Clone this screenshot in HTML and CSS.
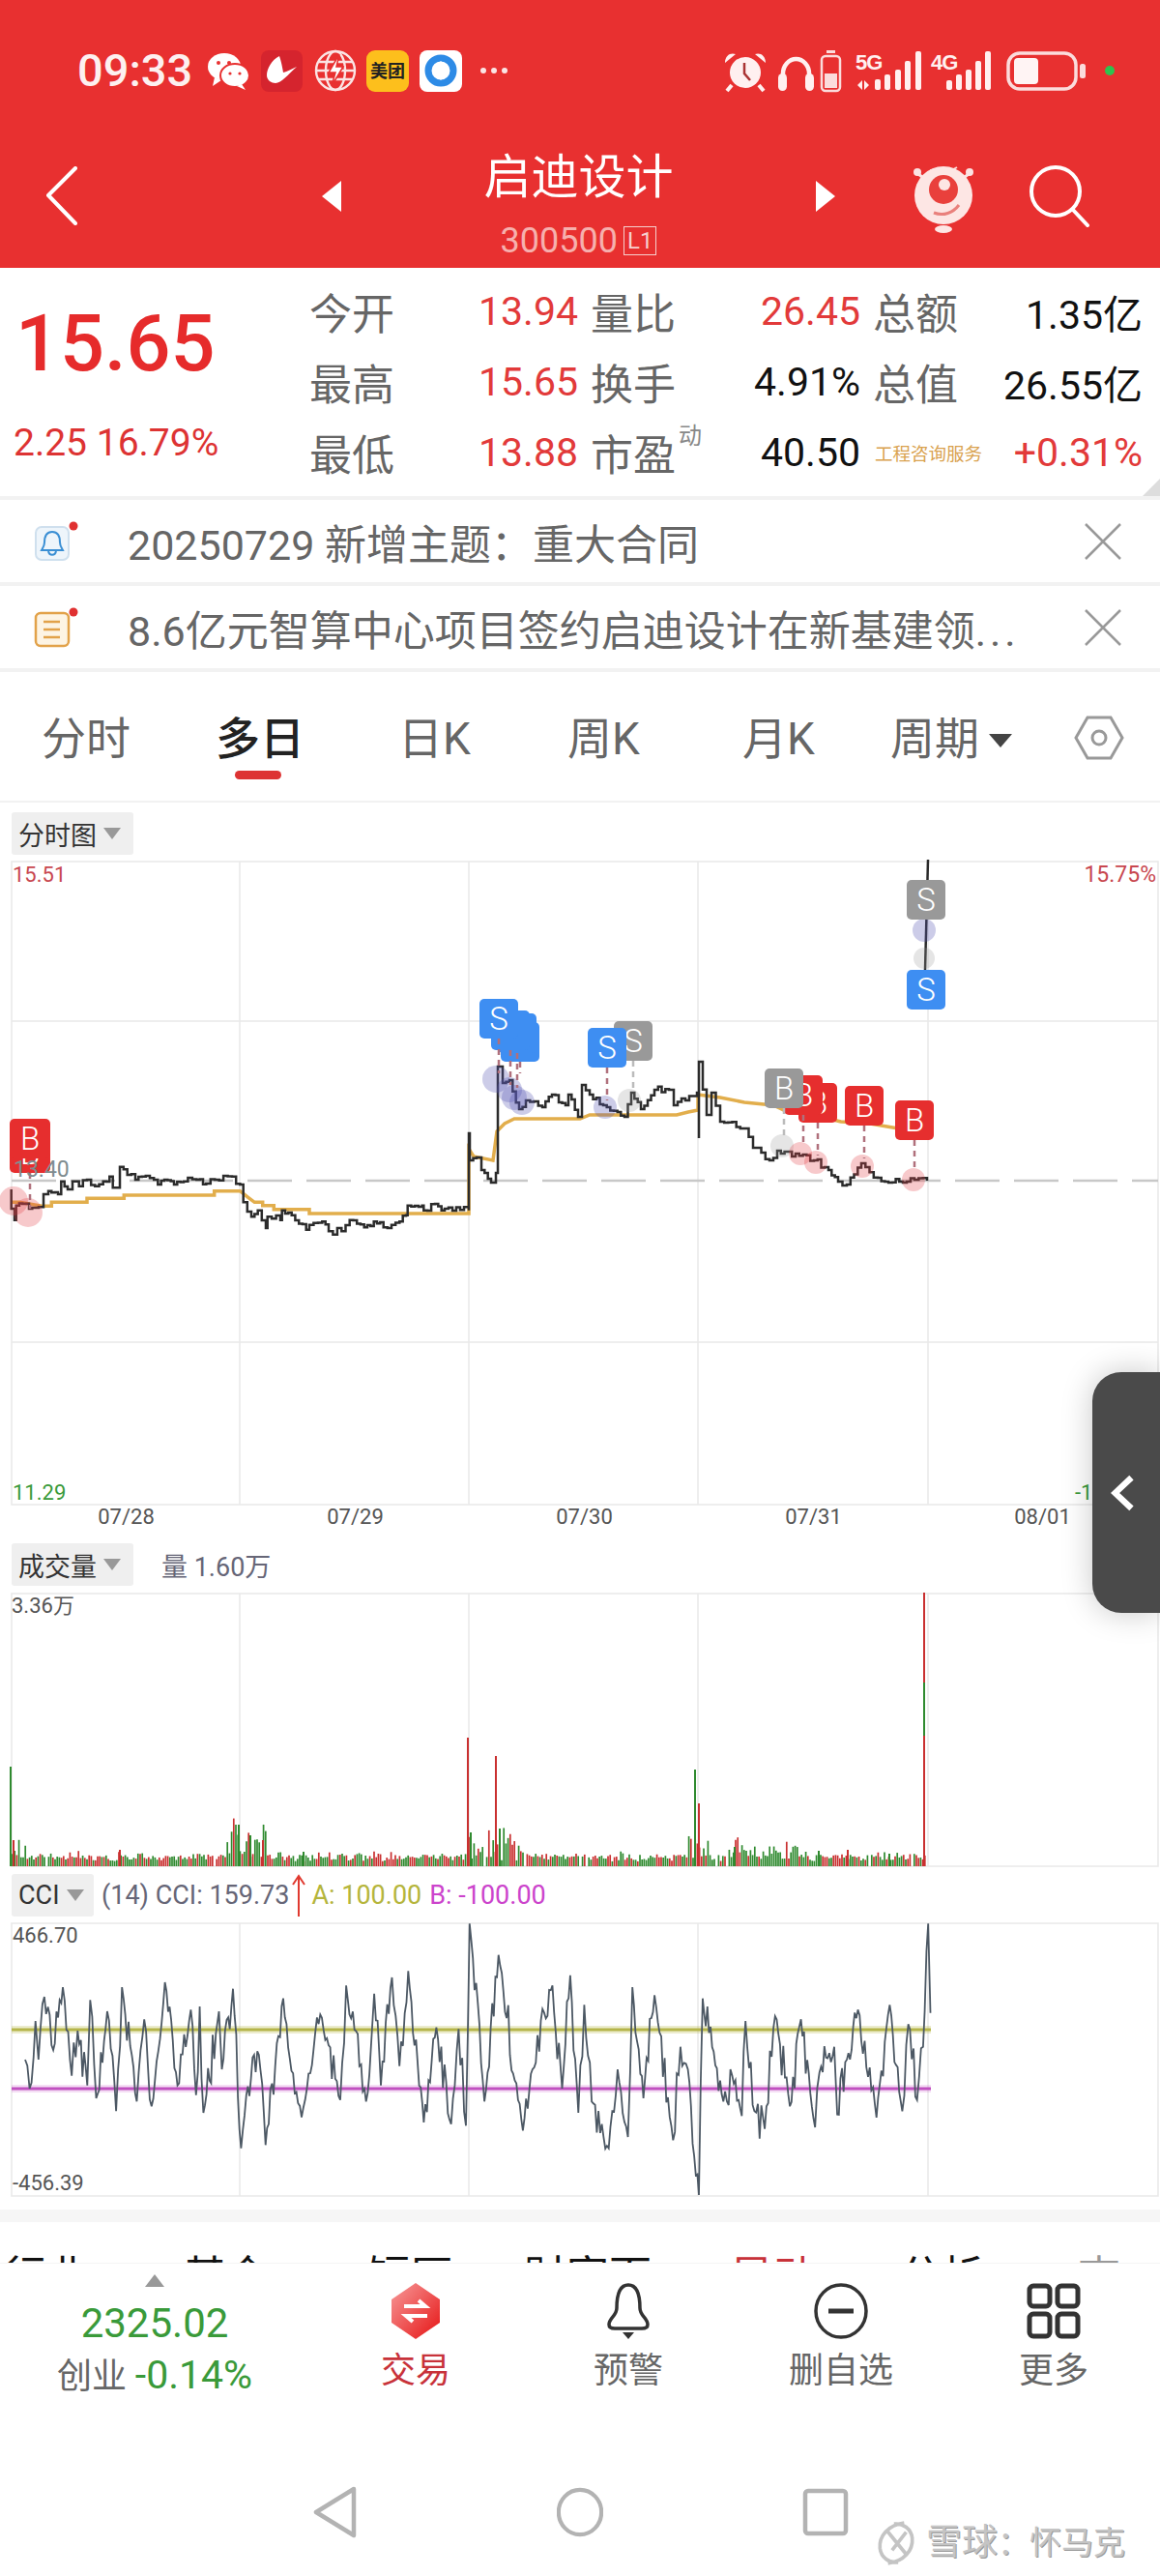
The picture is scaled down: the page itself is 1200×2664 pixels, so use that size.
FILE: index.html
```html
<!DOCTYPE html>
<html lang="zh-CN">
<head>
  <meta charset="UTF-8" />
  <meta name="viewport" content="width=device-width, initial-scale=1.0"/>
  <title>启迪设计 300500</title>
  <link rel="stylesheet" href="styles.css">
</head>
<body>
  <header class="top">
    <div class="status">
      <span class="time">09:33</span>
      <svg class="status-left" viewBox="210 45 320 56">
        <ellipse cx="232" cy="69" rx="17" ry="14" fill="#fff"/>
        <path d="M222 80l-2 9 9-6z" fill="#fff"/>
        <ellipse cx="243" cy="78" rx="15" ry="12" fill="#fff" stroke="#e83030" stroke-width="2"/>
        <path d="M250 87l4 6-9-4z" fill="#fff"/>
        <circle cx="226" cy="65" r="2" fill="#e83030"/><circle cx="237" cy="65" r="2" fill="#e83030"/>
        <circle cx="238" cy="76" r="1.6" fill="#e83030"/><circle cx="248" cy="76" r="1.6" fill="#e83030"/>
        <rect x="270" y="52" width="43" height="43" rx="8" fill="#d5242e"/>
        <path d="M289 58c-8 4-13 13-13 20 0 5 5 8 9 8 6 0 13-9 22-17-5 2-10 5-14 6-1-6-2-11-4-17z" fill="#fff"/>
        <g fill="none" stroke="#fbe4e4" stroke-width="2.4">
          <circle cx="347" cy="73" r="20"/>
          <ellipse cx="347" cy="73" rx="10" ry="20"/>
          <path d="M329 64h36M327 73h40M329 82h36"/>
        </g>
        <path d="M351 56l-11 19h7l-4 14 12-20h-7z" fill="#fff" stroke="#e83030" stroke-width="1.5"/>
        <rect x="379" y="52" width="44" height="43" rx="9" fill="#fdbf1c"/>
        <text class="mt" x="401" y="80">美团</text>
        <rect x="434" y="52" width="44" height="43" rx="8" fill="#fff"/>
        <circle cx="456" cy="73" r="13" fill="none" stroke="#2d8be6" stroke-width="7"/>
        <path d="M456 63c4 4 4 16 0 20-4-4-4-16 0-20z" fill="#fff"/>
        <circle cx="500" cy="73" r="3" fill="#fbe4e4"/><circle cx="511" cy="73" r="3" fill="#fbe4e4"/><circle cx="522" cy="73" r="3" fill="#fbe4e4"/>
      </svg>
      <svg class="status-right" viewBox="745 45 415 56">
        <circle cx="771" cy="75" r="16" fill="#fff0f0"/>
        <path d="M750 65c0-8 6-11 11-9zM792 65c0-8-6-11-11-9z" fill="#fff0f0"/>
        <path d="M757 88l-5 6M785 88l5 6" stroke="#fff0f0" stroke-width="4"/>
        <path d="M770 65v11l6 7" fill="none" stroke="#a33" stroke-width="2.5"/>
        <path d="M810 86v-10a13.500 15 0 0 1 27 0v10" fill="none" stroke="#fff0f0" stroke-width="4.500"/>
        <rect x="805" y="76" width="9" height="18" rx="4.500" fill="#fff0f0"/>
        <rect x="833" y="76" width="9" height="18" rx="4.500" fill="#fff0f0"/>
        <rect x="850" y="58" width="19" height="36" rx="4" fill="none" stroke="#fbdcdc" stroke-width="2.500"/>
        <rect x="855" y="52" width="9" height="3" fill="#fbdcdc"/>
        <rect x="853" y="76" width="13" height="15" fill="#fbdcdc"/>
        <text class="net" x="885" y="72">5G</text>
        <path d="M887 88l5-5v10zM899 88l-5-5v10z" fill="#fff0f0"/>
        <g fill="#fff0f0">
          <rect x="905" y="82" width="6" height="11" rx="2"/><rect x="915" y="77" width="6" height="16" rx="2"/>
          <rect x="926" y="72" width="6" height="21" rx="2"/><rect x="936" y="63" width="6" height="30" rx="2"/>
          <rect x="947" y="53" width="6" height="40" rx="2"/>
          <rect x="979" y="83" width="6" height="10" rx="2"/><rect x="989" y="77" width="6" height="16" rx="2"/>
          <rect x="999" y="72" width="6" height="21" rx="2"/><rect x="1009" y="63" width="6" height="30" rx="2"/>
          <rect x="1019" y="53" width="6" height="40" rx="2"/>
        </g>
        <text class="net" x="963" y="72">4G</text>
        <rect x="1043" y="55" width="70" height="37" rx="12" fill="none" stroke="#fbdcdc" stroke-width="3.500"/>
        <rect x="1049" y="60" width="25" height="27" rx="4" fill="#fff4f4"/>
        <rect x="1117" y="66" width="6" height="15" rx="2.500" fill="#fbdcdc"/>
        <circle cx="1148" cy="73" r="5" fill="#2fc24f"/>
      </svg>
    </div>
    <nav class="nav">
      <svg class="back" viewBox="0 0 33 61"><path d="M31 2L3 30l28 29" fill="none" stroke="#fff" stroke-width="4" stroke-linecap="round" stroke-linejoin="round"/></svg>
      <span class="arrow arrow-left"></span>
      <div class="stock">
        <div class="stock-name">启迪设计</div>
        <div class="stock-code">300500<span class="level">L1</span></div>
      </div>
      <span class="arrow arrow-right"></span>
      <svg class="robot" viewBox="0 0 64 78">
        <path d="M18 12l8 3 6-5 5 4 9-5" fill="none" stroke="#fbdcdc" stroke-width="2"/>
        <circle cx="5" cy="14" r="4" fill="#fbe3e3"/><circle cx="59" cy="14" r="4" fill="#fbe3e3"/>
        <path d="M6 16l8 6M58 16l-8 6" stroke="#fbe3e3" stroke-width="3"/>
        <ellipse cx="32" cy="38" rx="30" ry="30" fill="#fde6e4"/>
        <circle cx="32" cy="32" r="15" fill="#e9403c"/>
        <circle cx="33" cy="27" r="6" fill="#fde6e4"/>
        <path d="M22 56c10 4 20 0 26-8" fill="none" stroke="#e9807c" stroke-width="3"/>
        <ellipse cx="32" cy="73" rx="9" ry="4" fill="#fde6e4"/>
      </svg>
      <svg class="search" viewBox="0 0 63 64"><circle cx="28" cy="27" r="25" fill="none" stroke="#fff" stroke-width="4"/><path d="M46 46l15 16" stroke="#fff" stroke-width="4" stroke-linecap="round"/></svg>
    </nav>
  </header>

  <section class="quote">
    <div class="price-box">
      <div class="price">15.65</div>
      <div class="change">2.25 16.79%</div>
    </div>
    <div class="fields">
      <span class="lab">今开</span><span class="val up">13.94</span>
      <span class="lab">量比</span><span class="val up">26.45</span>
      <span class="lab">总额</span><span class="val">1.35亿</span>
      <span class="lab">最高</span><span class="val up">15.65</span>
      <span class="lab">换手</span><span class="val">4.91%</span>
      <span class="lab">总值</span><span class="val">26.55亿</span>
      <span class="lab">最低</span><span class="val up">13.88</span>
      <span class="lab pe">市盈<sup class="dyn">动</sup></span><span class="val">40.50</span>
      <span class="lab sector">工程咨询服务</span><span class="val up">+0.31%</span>
    </div>
    <span class="corner"></span>
  </section>

  <div class="notice">
    <svg class="notice-icon" viewBox="0 0 46 42">
      <rect x="2" y="6" width="34" height="34" rx="6" fill="#eef5fb" stroke="#cfe0ee" stroke-width="2"/>
      <path d="M19 11c-6 0-8 5-8 11 0 4-2 6-3 8h22c-1-2-3-4-3-8 0-6-2-11-8-11z" fill="none" stroke="#3b8fd4" stroke-width="2"/>
      <path d="M15 31c1 5 7 5 8 0" fill="none" stroke="#3b8fd4" stroke-width="2"/>
      <circle cx="41" cy="5" r="4.500" fill="#e03030"/>
    </svg>
    <span class="notice-text">20250729 新增主题：重大合同</span>
    <svg class="notice-close" viewBox="0 0 38 38"><path d="M1 1l36 36M37 1L1 37" stroke="#999" stroke-width="2.500"/></svg>
  </div>
  <div class="notice">
    <svg class="notice-icon" viewBox="0 0 46 42">
      <rect x="2" y="6" width="34" height="34" rx="5" fill="#fdf4e4" stroke="#e2a24a" stroke-width="2.500"/>
      <path d="M10 15h17M10 23h17M10 31h17" stroke="#e2a24a" stroke-width="2.500"/>
      <circle cx="41" cy="5" r="4.500" fill="#e03030"/>
    </svg>
    <span class="notice-text">8.6亿元智算中心项目签约启迪设计在新基建领<span class="dots">...</span></span>
    <svg class="notice-close" viewBox="0 0 38 38"><path d="M1 1l36 36M37 1L1 37" stroke="#999" stroke-width="2.500"/></svg>
  </div>

  <div class="tabs">
    <span class="tab">分时</span>
    <span class="tab tab-on">多日</span>
    <span class="tab">日K</span>
    <span class="tab">周K</span>
    <span class="tab">月K</span>
    <span class="tab">周期<i class="tab-caret"></i></span>
    <svg class="hex" viewBox="0 0 52 46"><path d="M14 2h24l12 21-12 21H14L2 23z" fill="none" stroke="#999" stroke-width="3"/><circle cx="26" cy="23" r="7" fill="none" stroke="#999" stroke-width="3"/></svg>
  </div>

  <div class="panel-head head-price"><span class="picker">分时图<i class="caret"></i></span></div>
  <div class="chart chart-price">
    <svg id="priceChart" class="plot" viewBox="0 891 1200 665"></svg>
    <span class="tick tick-up t-tl">15.51</span>
    <span class="tick tick-up t-tr">15.75%</span>
    <span class="tick tick-mid">13.40</span>
    <span class="tick tick-down t-bl">11.29</span>
    <span class="tick tick-down t-br">-15.75%</span>
  </div>
  <div class="dates">
    <span>07/28</span><span>07/29</span><span>07/30</span><span>07/31</span><span>08/01</span>
  </div>

  <div class="panel-head head-vol">
    <span class="picker">成交量<i class="caret"></i></span>
    <span class="legend legend-vol">量 1.60万</span>
  </div>
  <div class="chart chart-small">
    <svg id="volChart" class="plot" viewBox="0 1648 1200 282"></svg>
    <span class="tick tick-grey t-vol">3.36万</span>
  </div>

  <div class="panel-head head-cci">
    <span class="picker picker-cci">CCI<i class="caret"></i></span>
    <span class="legend">(14) CCI: 159.73</span>
    <svg class="up-arrow" viewBox="0 0 14 44"><path d="M7 44V3M1 11l6-9 6 9" fill="none" stroke="#e0392f" stroke-width="2"/></svg>
    <span class="legend legend-a">A: 100.00</span>
    <span class="legend legend-b">B: -100.00</span>
  </div>
  <div class="chart chart-small">
    <svg id="cciChart" class="plot" viewBox="0 1989 1200 282"></svg>
    <span class="tick tick-grey t-cci-top">466.70</span>
    <span class="tick tick-grey t-cci-low">-456.39</span>
  </div>

  <div class="band"></div>
  <div class="subtabs">
    <span>行业</span><span>基金</span><span>短历</span><span>财富面</span><span class="subtab-on">异动</span><span>分析</span><span class="subtab-dim">查</span>
  </div>

  <footer class="bottom">
    <div class="index">
      <span class="index-caret"></span>
      <div class="index-val">2325.02</div>
      <div class="index-name">创业 <b>-0.14%</b></div>
    </div>
    <div class="action action-on">
      <svg viewBox="0 0 56 60">
        <defs><linearGradient id="tradeFill" x1="0" y1="0" x2="1" y2="1"><stop offset="0" stop-color="#f79a9a"/><stop offset="1" stop-color="#e61414"/></linearGradient></defs>
        <path d="M28 1l25 17v24L28 59 3 42V18z" fill="url(#tradeFill)"/>
        <path d="M16 25h22l-7-6M40 35H18l7 6" fill="none" stroke="#fff" stroke-width="4"/>
      </svg>
      <span>交易</span>
    </div>
    <div class="action">
      <svg viewBox="0 0 56 60">
        <path d="M28 3c-10 0-12 12-12 24 0 8-8 10-8 17 0 3 3 4 6 4h28c3 0 6-1 6-4 0-7-8-9-8-17 0-12-2-24-12-24z" fill="none" stroke="#333" stroke-width="3.500"/>
        <path d="M22 52h12l-6 7z" fill="#333"/>
      </svg>
      <span>预警</span>
    </div>
    <div class="action">
      <svg viewBox="0 0 56 60">
        <ellipse cx="28" cy="30" rx="26" ry="27" fill="none" stroke="#333" stroke-width="3.500"/>
        <path d="M15 30h26" stroke="#333" stroke-width="5"/>
      </svg>
      <span>删自选</span>
    </div>
    <div class="action">
      <svg viewBox="0 0 56 60">
        <g fill="none" stroke="#333" stroke-width="5">
          <rect x="3" y="4" width="21" height="21" rx="4"/><rect x="32" y="4" width="21" height="21" rx="4"/>
          <rect x="3" y="33" width="21" height="23" rx="4"/><rect x="32" y="33" width="21" height="23" rx="4"/>
        </g>
      </svg>
      <span>更多</span>
    </div>
  </footer>

  <div class="sysbar">
    <svg viewBox="0 0 46 54" class="sys-btn"><path d="M43 3L4 27l39 24z" fill="none" stroke="#b3b3b3" stroke-width="4.500" stroke-linejoin="round"/></svg>
    <svg viewBox="0 0 52 54" class="sys-btn sys-mid"><ellipse cx="26" cy="27" rx="24" ry="25" fill="none" stroke="#b3b3b3" stroke-width="4.500"/></svg>
    <svg viewBox="0 0 48 54" class="sys-btn"><rect x="3" y="5" width="42" height="44" rx="3" fill="none" stroke="#b3b3b3" stroke-width="4.500"/></svg>
  </div>

  <div class="handle">
    <svg viewBox="0 0 24 36"><path d="M20 3L4 18l16 15" fill="none" stroke="#fff" stroke-width="6"/></svg>
  </div>

  <div class="watermark">
    <svg viewBox="0 0 40 46"><path d="M28 3C12 5 3 16 4 28c1 9 9 15 18 14M12 43c16-2 25-13 24-25C35 9 27 3 18 4M12 12l18 22M30 12L16 30" fill="none" stroke="#c4c4c4" stroke-width="3.500"/></svg>
    <span class="wm-site">雪球</span><span class="wm-user">：怀马克</span>
  </div>

  <script src="chart.js"></script>
</body>
</html>
```

FILE: styles.css
```css
* {
  box-sizing: border-box;
}
body {
  margin: 0;
  width: 1200px;
  height: 2664px;
  position: relative;
  overflow: hidden;
  background: #fff;
  font-family: Roboto, "Noto Sans CJK SC", sans-serif;
  color: #333;
}
svg {
  display: block;
}

/* red header */
.top {
  height: 277px;
  background: #e83030;
  color: #fff;
}
.status {
  height: 118px;
  padding: 45px 40px 0 80px;
  display: flex;
  align-items: flex-start;
}
.time {
  font-size: 47px;
  font-weight: 500;
  line-height: 56px;
  color: #fdf0f0;
  width: 130px;
}
.status-left {
  width: 320px;
  height: 56px;
}
.status-right {
  width: 415px;
  height: 56px;
  margin-left: 215px;
}
.mt {
  font-size: 18px;
  font-weight: 700;
  fill: #222;
  text-anchor: middle;
  font-family: "Noto Sans CJK SC", sans-serif;
}
.net {
  font-size: 22px;
  font-weight: 700;
  fill: #fff0f0;
  font-family: "Liberation Sans", sans-serif;
  letter-spacing: -1px;
}
.nav {
  height: 159px;
  padding: 10px 72px 0 47px;
  display: flex;
  align-items: center;
}
.back {
  width: 33px;
  height: 61px;
}
.arrow {
  width: 0;
  height: 0;
  border-top: 16px solid transparent;
  border-bottom: 16px solid transparent;
}
.arrow-left {
  margin-left: 253px;
  border-right: 20px solid #fff;
}
.arrow-right {
  border-left: 20px solid #fff;
}
.stock {
  width: 491px;
  align-self: flex-start;
  margin-top: 29px;
  text-align: center;
}
.stock-name {
  font-size: 49px;
  line-height: 54px;
}
.stock-code {
  margin-top: 20px;
  font-size: 36px;
  line-height: 36px;
  color: #f6b0ae;
  display: flex;
  justify-content: center;
  align-items: center;
  gap: 6px;
}
.level {
  font-size: 24px;
  line-height: 28px;
  border: 1px solid #f6d0ce;
  padding: 0 3px;
  color: #f6d0ce;
}
.robot {
  width: 64px;
  height: 78px;
  margin-left: 80px;
}
.search {
  width: 63px;
  height: 64px;
  margin-left: 56px;
}

/* quote block */
.quote {
  height: 240px;
  position: relative;
  display: flex;
  padding-top: 8px;
  border-bottom: 4px solid #f2f2f2;
}
.price-box {
  width: 320px;
  padding-left: 14px;
}
.price {
  font-size: 81px;
  font-weight: 500;
  line-height: 100px;
  margin-top: 21px;
  padding-left: 2px;
  color: #e62b2b;
}
.change {
  font-size: 39px;
  line-height: 44px;
  margin-top: 30px;
  color: #dd3333;
  white-space: nowrap;
}
.fields {
  display: grid;
  grid-template-columns: 85px 193px 100px 192px 100px 192px;
  grid-auto-rows: 73px;
  align-items: center;
}
.lab {
  font-size: 44px;
  color: #666;
  white-space: nowrap;
}
.lab:nth-child(6n+3),
.lab:nth-child(6n+5) {
  margin-left: 13px;
}
.val {
  font-size: 41px;
  text-align: right;
  color: #111;
  white-space: nowrap;
}
.val.up {
  color: #e23a3a;
}
.pe {
  position: relative;
}
.dyn {
  position: absolute;
  left: 91px;
  top: 0;
  font-size: 24px;
  line-height: 30px;
  color: #888;
}
.lab.sector {
  font-size: 18.500px;
  color: #d9a24f;
  padding-left: 2px;
}
.corner {
  position: absolute;
  right: 0;
  bottom: 0;
  width: 0;
  height: 0;
  border-bottom: 18px solid #ddd;
  border-left: 18px solid transparent;
}

/* notices */
.notice {
  height: 89px;
  display: flex;
  align-items: center;
  padding: 0 40px 0 35px;
  border-bottom: 4px solid #f2f2f2;
}
.notice-icon {
  width: 46px;
  height: 42px;
}
.notice-text {
  margin-left: 51px;
  font-size: 43px;
  color: #666;
  white-space: nowrap;
  flex: 1;
}
.dots {
  letter-spacing: 4px;
}
.notice-close {
  width: 38px;
  height: 38px;
}

/* period tabs */
.tabs {
  height: 135px;
  padding: 45px 0 0 43px;
  display: grid;
  grid-template-columns: 180px 189px 175px 181px 153px 190px 52px;
  align-items: start;
  border-bottom: 2px solid #f2f2f2;
}
.tab {
  font-size: 46px;
  line-height: 48px;
  color: #666;
  position: relative;
  white-space: nowrap;
}
.tab-on {
  color: #222;
  font-weight: 500;
}
.tab-on::after {
  content: "";
  position: absolute;
  left: 20px;
  top: 57px;
  width: 48px;
  height: 9px;
  border-radius: 5px;
  background: #dd3333;
}
.tab-caret {
  display: inline-block;
  margin-left: 10px;
  vertical-align: 7px;
  border-top: 14px solid #444;
  border-left: 12px solid transparent;
  border-right: 12px solid transparent;
}
.hex {
  width: 52px;
  height: 46px;
}

/* charts */
.panel-head {
  display: flex;
  align-items: center;
  padding-left: 12px;
}
.head-price {
  height: 61px;
  padding-top: 10px;
  padding-bottom: 7px;
}
.head-vol {
  height: 52px;
  padding-bottom: 8px;
}
.head-cci {
  height: 59px;
  padding-top: 8px;
  padding-bottom: 7px;
}
.picker {
  height: 44px;
  background: #efefef;
  border-radius: 3px;
  padding-left: 7px;
  width: 126px;
  font-size: 27px;
  color: #333;
  display: flex;
  align-items: center;
}
.picker-cci {
  width: 85px;
}
.caret {
  margin-left: 7px;
  border-top: 12px solid #999;
  border-left: 9px solid transparent;
  border-right: 9px solid transparent;
}
.legend {
  font-size: 27px;
  color: #667;
  margin-left: 8px;
  white-space: nowrap;
}
.legend-vol {
  margin-left: 29px;
}
.legend-a {
  color: #b5b53c;
  margin-left: 6px;
}
.legend-b {
  color: #cc44cc;
}
.up-arrow {
  width: 14px;
  height: 44px;
  margin-left: 3px;
}
.chart {
  position: relative;
  width: 1200px;
}
.chart-price {
  height: 665px;
}
.chart-small {
  height: 282px;
}
.plot {
  width: 1200px;
  height: 100%;
  overflow: visible;
}
.mark-text {
  font-family: Roboto, sans-serif;
  font-size: 33px;
  font-weight: 300;
  fill: #fff;
  text-anchor: middle;
}
.tick {
  position: absolute;
  font-size: 22px;
  line-height: 26px;
}
.tick-up {
  color: #c8474f;
}
.tick-down {
  color: #3a9a3a;
}
.tick-grey {
  color: #555;
}
.tick-mid {
  left: 14px;
  top: 306px;
  color: #7f8c8f;
  font-size: 23px;
}
.t-tl {
  left: 13px;
  top: 1px;
}
.t-tr {
  right: 4px;
  top: 1px;
  font-size: 23px;
}
.t-bl {
  left: 13px;
  top: 640px;
}
.t-br {
  left: 1112px;
  top: 640px;
}
.t-vol {
  left: 12px;
  top: 0;
}
.t-cci-top {
  left: 13px;
  top: 0;
}
.t-cci-low {
  left: 13px;
  bottom: 0;
}
.dates {
  height: 40px;
  padding: 0 0 0 12px;
  display: grid;
  grid-template-columns: repeat(5, 237px);
  font-size: 22px;
  line-height: 26px;
  color: #555;
  text-align: center;
}

/* bottom */
.band {
  margin-top: 14px;
  height: 13px;
  background: #f6f6f6;
}
.subtabs {
  height: 42px;
  overflow: hidden;
  padding: 33px 0 0 4px;
  display: grid;
  grid-template-columns: 186px 190px 162px 214px 174px 185px 80px;
  font-size: 44px;
  line-height: 48px;
  color: #111;
}
.subtabs .subtab-on {
  color: #c8323a;
}
.subtabs .subtab-dim {
  color: #999;
}
.bottom {
  height: 160px;
  display: grid;
  grid-template-columns: 320px repeat(4, 220px);
  text-align: center;
  border-top: 1px solid #f4f4f4;
}
.index {
  padding-top: 11px;
  display: flex;
  flex-direction: column;
  align-items: center;
}
.index-caret {
  border-bottom: 13px solid #999;
  border-left: 10px solid transparent;
  border-right: 10px solid transparent;
  margin-bottom: 13px;
}
.index-val {
  font-size: 42px;
  line-height: 50px;
  color: #3a9a3a;
}
.index-name {
  font-size: 36px;
  line-height: 52px;
  margin-top: 2px;
  color: #666;
  white-space: nowrap;
}
.index-name b {
  font-size: 41px;
  font-weight: 400;
  color: #3a9a3a;
}
.action {
  padding-top: 19px;
  display: flex;
  flex-direction: column;
  align-items: center;
  font-size: 36px;
  line-height: 44px;
  color: #666;
}
.action svg {
  width: 56px;
  height: 60px;
  margin-bottom: 10px;
}
.action-on {
  color: #c8323a;
}
.sysbar {
  padding-top: 71px;
  display: flex;
  justify-content: center;
  align-items: center;
}
.sys-btn {
  width: 48px;
  height: 54px;
}
.sys-mid {
  margin: 0 206px;
}
.handle {
  position: absolute;
  right: 0;
  top: 1419px;
  width: 70px;
  height: 249px;
  background: #4a4a4a;
  border-radius: 30px 0 0 30px;
  box-shadow: 0 0 32px rgba(0, 0, 0, 0.22);
  display: flex;
  align-items: center;
  padding-left: 19px;
}
.handle svg {
  width: 26px;
  height: 38px;
}
.watermark {
  position: absolute;
  left: 906px;
  top: 2606px;
  display: flex;
  align-items: center;
  color: #c4c4c4;
  white-space: nowrap;
  text-shadow: 1px 1px 0 #999;
}
.watermark svg {
  width: 42px;
  height: 48px;
  margin-right: 10px;
}
.wm-site {
  font-size: 37px;
  line-height: 44px;
}
.wm-user {
  font-size: 33px;
  line-height: 44px;
}
```

FILE: chart.js
```js
// draws the three charts in page coordinates (see each svg's viewBox)
const NS = 'http://www.w3.org/2000/svg';
const COLS = [248, 485, 722, 960];

let seed = 20250731;
function rnd() {
  seed = (seed * 1103515245 + 12345) % 2147483648;
  return seed / 2147483648;
}

function add(parent, name, attrs) {
  const node = document.createElementNS(NS, name);
  for (const key in attrs) node.setAttribute(key, attrs[key]);
  parent.appendChild(node);
  return node;
}

function line(parent, x1, y1, x2, y2, color, width, dash) {
  const attrs = { x1, y1, x2, y2, stroke: color, 'stroke-width': width };
  if (dash) attrs['stroke-dasharray'] = dash;
  return add(parent, 'line', attrs);
}

function grid(svg, top, bottom, rows) {
  const color = '#e9e9e9';
  add(svg, 'rect', { x: 12, y: top, width: 1186, height: bottom - top, fill: 'none', stroke: color, 'stroke-width': 1.5 });
  COLS.forEach(x => line(svg, x, top, x, bottom, color, 1.5));
  rows.forEach(y => line(svg, 12, y, 1198, y, color, 1.5));
}

function polyline(svg, pts, color, width) {
  add(svg, 'polyline', {
    points: pts.map(p => p[0].toFixed(1) + ',' + p[1].toFixed(1)).join(' '),
    fill: 'none', stroke: color, 'stroke-width': width, 'stroke-linejoin': 'miter'
  });
}

// stair-step a list of anchor points, adding a little noise between them
function jag(anchors, amp) {
  const out = [anchors[0]];
  let lastY = anchors[0][1];
  for (let i = 1; i < anchors.length; i++) {
    const a = anchors[i - 1], b = anchors[i];
    const steps = Math.max(1, Math.round((b[0] - a[0]) / 4));
    for (let s = 1; s <= steps; s++) {
      const x = a[0] + (b[0] - a[0]) * s / steps;
      let y = a[1] + (b[1] - a[1]) * s / steps;
      if (s < steps) y += (rnd() - 0.5) * amp;
      out.push([x, lastY], [x, y]);
      lastY = y;
    }
  }
  return out;
}

// anchors for 07/28 and 07/29 read at 3x, the rest in page px
const z = (zx, zy) => [zx / 3, 1150 + zy / 3];
const priceAnchors = [
  z(35, 240), z(35, 300), z(45, 300), z(45, 335), z(50, 290), z(70, 285), z(90, 300), z(120, 295),
  z(135, 255), z(150, 245), z(180, 255), z(190, 215), z(210, 240), z(225, 215), z(245, 230), z(270, 210),
  z(295, 230), z(320, 215), z(340, 200), z(350, 235), z(365, 235), z(372, 170), z(395, 195), z(420, 210),
  z(440, 200), z(465, 205), z(490, 225), z(510, 210), z(540, 225), z(570, 215), z(610, 210), z(640, 222),
  z(680, 212), z(720, 200), z(745, 225), z(755, 280), z(780, 325), z(800, 305), z(825, 360), z(830, 325),
  z(870, 335), z(875, 305), z(905, 320), z(950, 365), z(960, 350), z(1000, 340), z(1020, 370), z(1060, 370),
  z(1085, 335), z(1130, 358), z(1160, 340), z(1190, 358), z(1240, 340), z(1260, 320), z(1265, 290),
  z(1310, 290), z(1315, 305), z(1350, 285), z(1380, 300), z(1440, 295), z(1455, 305),
  [485, 1172], [486, 1200], [493, 1197], [498, 1210], [508, 1223], [513, 1213], [515, 1103], [520, 1120],
  [527, 1117], [537, 1147], [544, 1138], [561, 1145], [571, 1132], [585, 1143], [588, 1132], [598, 1155],
  [602, 1122], [610, 1132], [624, 1143], [646, 1155], [653, 1130], [663, 1147], [677, 1127], [692, 1127],
  [697, 1143], [721, 1130], [723, 1177], [723, 1098], [731, 1153], [736, 1130], [745, 1160], [770, 1167],
  [779, 1187], [796, 1200], [804, 1190], [823, 1193], [842, 1200], [857, 1210], [867, 1222], [876, 1225],
  [891, 1203], [908, 1218], [934, 1223], [946, 1220], [959, 1221]
];

const avgPoints = [
  z(35, 280), z(60, 280), z(130, 292), z(160, 292), z(160, 280), z(270, 280), z(270, 268), z(385, 268),
  z(385, 258), z(665, 258), z(665, 245), z(745, 245), z(770, 265), z(790, 280), z(815, 280), z(815, 290),
  z(850, 290), z(850, 302), z(960, 302), z(960, 315), z(1260, 315), z(1455, 315),
  [485, 1188], [490, 1196], [510, 1200], [514, 1170], [522, 1162], [532, 1157], [600, 1157], [610, 1153],
  [700, 1153], [712, 1150], [722, 1148], [722, 1132], [745, 1135], [770, 1140], [800, 1143], [815, 1150],
  [840, 1153], [870, 1160], [900, 1162], [935, 1168], [960, 1168]
];

// translucent trade dots: x, y, radius, kind
const dots = [
  [14, 1242, 15, 'r'], [29, 1254, 15, 'r'],
  [513, 1116, 14, 'b'], [527, 1127, 13, 'b'], [532, 1135, 13, 'b'], [540, 1140, 13, 'b'],
  [626, 1145, 12, 'b'], [651, 1138, 12, 'g'],
  [809, 1185, 12, 'g'], [828, 1193, 12, 'r'], [844, 1202, 12, 'r'], [892, 1206, 12, 'r'], [945, 1220, 12, 'r'],
  [956, 962, 12, 'b'], [956, 991, 11, 'g']
];

// flags in paint order: left, top, label, kind, dashed stem down to y
const flags = [
  [518, 1057, '', 'b', 1110], [515, 1048, '', 'b', 1125], [508, 1045, '', 'b', 1122], [496, 1033, 'S', 'b', 1110],
  [635, 1056, 'S', 'g', 1130], [608, 1063, 'S', 'b', 1138],
  [938, 910, 'S', 'g', 0], [938, 1003, 'S', 'b', 0],
  [826, 1120, 'B', 'r', 1195], [811, 1112, 'B', 'r', 1186], [791, 1105, 'B', 'g', 1178],
  [874, 1123, 'B', 'r', 1198], [926, 1138, 'B', 'r', 1212],
  [10, 1172, 'B', 'r', 1250], [10, 1157, 'B', 'r', 0]
];
const FLAG = { b: '#3e8ef2', g: '#999999', r: '#e62e2e' };
const DOT = { b: 'rgba(86,86,178,0.30)', g: 'rgba(150,150,150,0.25)', r: 'rgba(226,60,70,0.28)' };

function drawPrice() {
  const svg = document.getElementById('priceChart');
  grid(svg, 891, 1556, [1056, 1388]);
  line(svg, 12, 1221, 1198, 1221, '#c8c8c8', 2.5, '46 15');
  polyline(svg, avgPoints, '#e2ae4c', 3.5);
  polyline(svg, jag(priceAnchors, 7), '#2b2b2b', 2.5);
  line(svg, 960, 889, 957, 1003, '#2b2b2b', 2.5);
  dots.forEach(d => add(svg, 'circle', { cx: d[0], cy: d[1], r: d[2], fill: DOT[d[3]] }));
  flags.forEach(f => {
    const w = f[0] === 10 ? 42 : 40;
    if (f[4]) line(svg, f[0] + w / 2, f[1] + 41, f[0] + w / 2, f[4], f[3] === 'g' ? '#bbb' : '#b0707c', 2.5, '6 5');
    add(svg, 'rect', { x: f[0], y: f[1], width: w, height: 41, rx: 5, fill: FLAG[f[3]] });
    if (f[2]) add(svg, 'text', { x: f[0] + w / 2, y: f[1] + 32, class: 'mark-text' }).textContent = f[2];
  });
}

function drawVolume() {
  const svg = document.getElementById('volChart');
  const bottom = 1930;
  const GREEN = '#2f8a2f', RED = '#c93030';
  grid(svg, 1648, bottom, []);
  const busy = x => {
    if (x < 30) return 14;
    if (x > 235 && x < 280) return 28;
    if (x > 484 && x < 545) return 26;
    if (x > 712 && x < 770) return 22;
    if (x > 770 && x < 835) return 12;
    return 4;
  };
  for (let x = 13; x < 958; x += 2.2) {
    const h = 5 + rnd() * 6 + rnd() * rnd() * busy(x) * 1.6;
    if (rnd() < 0.04) continue;
    line(svg, x, bottom, x, bottom - h, rnd() < 0.55 ? GREEN : RED, 1.7);
  }
  // the tall bars, x / top / colour
  const spikes = [
    [11, 1827, GREEN], [14, 1903, RED], [124, 1913, RED], [247, 1887, GREEN], [259, 1898, GREEN],
    [272, 1903, RED], [314, 1915, GREEN], [484, 1797, RED], [487, 1895, GREEN], [513, 1816, RED],
    [517, 1891, GREEN], [719, 1830, GREEN], [723, 1865, RED], [760, 1910, GREEN], [847, 1914, GREEN],
    [877, 1913, RED], [920, 1917, GREEN]
  ];
  spikes.forEach(s => line(svg, s[0], bottom, s[0], s[1], s[2], 2));
  line(svg, 956, bottom, 956, 1647, RED, 2);
  line(svg, 956, 1795, 956, 1740, GREEN, 2);
}

function drawCci() {
  const svg = document.getElementById('cciChart');
  grid(svg, 1989, 2271, []);
  line(svg, 12, 2099, 963, 2099, 'rgba(181,181,60,0.25)', 8);
  line(svg, 12, 2160, 963, 2160, 'rgba(200,80,200,0.18)', 8);
  line(svg, 12, 2099, 963, 2099, '#b5b54a', 3);
  line(svg, 12, 2160, 963, 2160, '#c050c0', 3);
  // swing highs and lows read off the 1.307x by 3x crop
  const swings = [34,570,40,660,48,450,52,570,60,375,72,540,85,345,97,620,105,480,118,650,122,385,130,690,145,420,157,730,165,345,185,700,195,445,205,715,223,330,240,650,258,415,265,680,270,405,275,735,296,420,300,600,315,350,326,845,333,680,350,555,359,835,383,380,403,705,415,660,433,430,460,695,468,340,495,700,506,365,515,650,530,315,540,590,552,295,573,765,590,470,610,770,620,475,630,775,635,148,655,700,674,245,707,790,720,600,747,340,760,660,771,308,782,735,790,400,800,700,823,845,835,600,849,810,855,345,870,690,885,370,910,820,920,530,930,600,945,990,950,380,965,545,978,700,990,620,1003,745,1008,450,1020,730,1034,785,1048,435,1068,715,1083,445,1102,780,1108,610,1128,530,1132,740,1145,570,1160,415,1185,750,1203,400,1220,730,1228,460,1240,695,1248,530,1255,148,1258,425];
  const pts = [];
  for (let i = 0; i < swings.length; i += 2) {
    const x = swings[i] / 1.307, y = 1940 + swings[i + 1] / 3;
    if (pts.length) {
      const last = pts[pts.length - 1];
      const dx = x - last[0];
      const n = Math.floor(dx / 1.6);
      // fill the gap with small spikes so the trace stays dense
      for (let j = 1; j < n; j++) {
        const t = j / n;
        const wob = (rnd() - 0.5) * 46 * Math.sin(Math.PI * t);
        pts.push([last[0] + dx * t, last[1] + (y - last[1]) * t + wob]);
      }
    }
    pts.push([x, y]);
  }
  polyline(svg, pts, '#4c5864', 1.8);
}

drawPrice();
drawVolume();
drawCci();
```
